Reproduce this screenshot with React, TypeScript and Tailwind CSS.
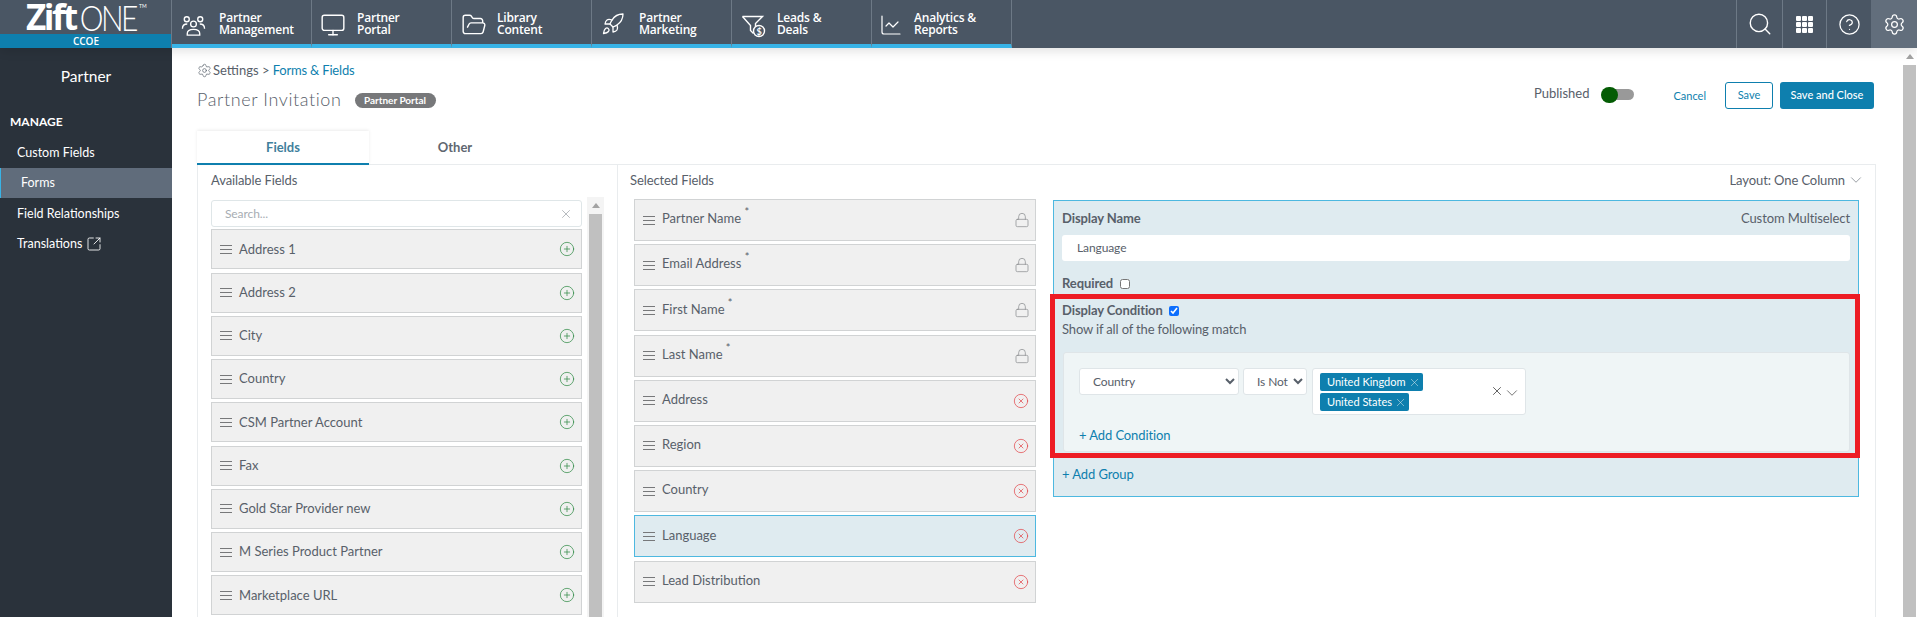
import { ChartLine, ChevronDown, CircleHelp, CirclePlus, CircleX, FolderOpen, Lock, Monitor, Rocket, Search, Settings, SquareArrowOutUpRight, X } from 'lucide-react';
import type { ReactNode } from 'react';

const availableFields = ['Address 1', 'Address 2', 'City', 'Country', 'CSM Partner Account', 'Fax', 'Gold Star Provider new', 'M Series Product Partner', 'Marketplace URL'];
const lockedFields = ['Partner Name', 'Email Address', 'First Name', 'Last Name'];
const removableFields = ['Address', 'Region', 'Country', 'Language', 'Lead Distribution'];

function PartnersIcon() {
  return (
    <svg width="25" height="26" viewBox="0 0 26 26" fill="none" stroke="currentColor" strokeWidth="1.4">
      <circle cx="6" cy="7" r="2.6" />
      <circle cx="20" cy="7" r="2.6" />
      <circle cx="13" cy="12" r="3" />
      <path d="M1.5 17c0-3 2-5 5-5" />
      <path d="M24.5 17c0-3-2-5-5-5" />
      <path d="M6.5 23.5v-1.5c0-3 3-4.5 6.500-4.500s6.500 1.500 6.500 4.500v1.500z" />
    </svg>
  );
}

function FunnelIcon() {
  return (
    <svg width="26" height="26" viewBox="0 0 26 26" fill="none" stroke="currentColor" strokeWidth="1.4">
      <path d="M1.500 4.500h20l-7 7v3" />
      <path d="M1.500 4.500l8 9v5l3 3" />
      <circle cx="18" cy="19" r="5.500" />
      <text x="18" y="22.500" fontSize="9" textAnchor="middle" fill="currentColor" stroke="none" fontFamily="Lato, sans-serif" fontWeight="700">$</text>
    </svg>
  );
}

function NavItem({ icon, iconWidth, top, bottom }: { icon: ReactNode; iconWidth: string; top: string; bottom: string }) {
  return (
    <div className="w-[140px] h-full flex items-start pl-[9px] pt-[12px] border-r border-[#6d7986] border-b-4 border-b-[#38b3e6] text-white">
      <div className={`${iconWidth} shrink-0 text-white`}>{icon}</div>
      <div className="text-[12px] leading-[12px] font-semibold font-['Open_Sans',sans-serif] tracking-[-0.2px]">
        <div>{top}</div>
        <div>{bottom}</div>
      </div>
    </div>
  );
}

function IconCell({ width, children, active }: { width: string; children: ReactNode; active?: boolean }) {
  return <div className={`${width} ${active ? 'bg-[#626e7c]' : 'border-l border-[#6d7986]'} h-full flex items-center justify-center text-white`}>{children}</div>;
}

function Scrollbar({ className, gap }: { className: string; gap: string }) {
  return (
    <div className={`${className} shrink-0 flex flex-col items-center`}>
      <div className={`${gap} flex items-center justify-center`}>
        <div className="w-0 h-0 border-x-[4px] border-x-transparent border-b-[5px] border-b-[#a3a3a3]" />
      </div>
      <div className="flex-1 w-[13px] bg-[#c0c0c0]" />
    </div>
  );
}

function Grip() {
  return (
    <div className="w-[12px] shrink-0 flex flex-col gap-[3px]">
      <div className="h-px bg-[#77787a]" />
      <div className="h-px bg-[#77787a]" />
      <div className="h-px bg-[#77787a]" />
    </div>
  );
}

function Tag({ label }: { label: string }) {
  return (
    <div className="h-[18px] bg-[#0e7fae] rounded-[2px] pl-[7px] pr-[2px] flex items-center gap-[2px] text-white text-[11px] tracking-normal w-fit">
      {label}
      <X size={13} strokeWidth={1} className="text-[#d7e8ef]" />
    </div>
  );
}

export default function App() {
  return (
    <div className="h-screen w-full overflow-hidden flex flex-col bg-white text-[#58606a] font-['Lato',sans-serif]">
      <header className="h-12 shrink-0 flex bg-[#4a5664] relative z-10 shadow-[0_3px_10px_rgba(0,0,0,0.12)]">
        <div className="w-[172px] shrink-0 flex flex-col">
          <div className="h-[34px] flex items-start pl-[26px] text-white">
            <span className="text-[35px] leading-[34px] font-bold font-['Open_Sans',sans-serif] tracking-[-2.5px]">Zift</span>
            <span className="text-[30px] leading-[34px] font-light ml-[4px] tracking-[-2.5px] scale-y-[1.15] origin-center">ONE</span>
            <span className="text-[5px] leading-[5px] mt-[4px] ml-[3px]">TM</span>
          </div>
          <div className="h-[14px] bg-[#0e7fae] text-white text-[10px] leading-[14px] text-center font-semibold font-['Open_Sans',sans-serif]">CCOE</div>
        </div>
        <div className="flex h-full border-l border-[#6d7986] -ml-px">
          <NavItem iconWidth="w-[38px]" icon={<PartnersIcon />} top="Partner" bottom="Management" />
          <NavItem iconWidth="w-[36px]" icon={<Monitor size={26} strokeWidth={1.3} className="-ml-[1px]" />} top="Partner" bottom="Portal" />
          <NavItem iconWidth="w-[36px]" icon={<FolderOpen size={26} strokeWidth={1.3} />} top="Library" bottom="Content" />
          <NavItem iconWidth="w-[38px]" icon={<Rocket size={24} strokeWidth={1.3} />} top="Partner" bottom="Marketing" />
          <NavItem iconWidth="w-[36px]" icon={<FunnelIcon />} top="Leads &" bottom="Deals" />
          <NavItem iconWidth="w-[33px]" icon={<ChartLine size={24} strokeWidth={1.2} className="-ml-[2px] mt-[1px]" />} top="Analytics &" bottom="Reports" />
        </div>
        <div className="flex-1" />
        <div className="flex h-full">
          <IconCell width="w-[46px]"><Search size={26} strokeWidth={1.3} /></IconCell>
          <IconCell width="w-[44px]">
            <div className="grid grid-cols-3 gap-[1px]">
              {Array.from({ length: 9 }).map((_, i) => (
                <div key={i} className="w-[5px] h-[5px] bg-white rounded-[1px]" />
              ))}
            </div>
          </IconCell>
          <IconCell width="w-[45px]"><CircleHelp size={23} strokeWidth={1.3} /></IconCell>
          <IconCell width="w-[46px]" active><Settings size={23} strokeWidth={1.3} /></IconCell>
        </div>
      </header>

      <div className="flex flex-1 min-h-0">
        <aside className="w-[172px] shrink-0 bg-[#2a323b] text-white text-[12.5px]">
          <div className="mt-[18px] h-[20px] text-center text-[15.5px] leading-[20px]">Partner</div>
          <div className="mt-[28px] pl-[10px] h-[16px] text-[12px] leading-[16px] font-bold">MANAGE</div>
          <div className="mt-[8px] h-[30px] pl-[17px] leading-[30px]">Custom Fields</div>
          <div className="h-[30px] pl-[20px] leading-[30px] bg-[#606c7b] border-l border-[#38b3e6]">Forms</div>
          <div className="mt-[1px] h-[30px] pl-[17px] leading-[30px]">Field Relationships</div>
          <div className="h-[30px] pl-[17px] flex items-center gap-[4px]">
            Translations
            <SquareArrowOutUpRight size={16} strokeWidth={1.3} />
          </div>
        </aside>

        <main className="flex-1 min-w-0 flex">
          <div className="flex-1 min-w-0 flex flex-col pl-[25px] pr-[27px] pt-[14px]">
            <div className="h-[16px] flex items-center text-[13px] leading-[16px]">
              <Settings size={15} strokeWidth={1.1} className="mr-[1px]" />
              Settings &gt;&nbsp;<span className="text-[#0e7fae] tracking-[-0.2px]">Forms &amp; Fields</span>
            </div>

            <div className="mt-[4px] h-[49px] flex justify-between items-start">
              <div className="mt-[5px] h-[26px] flex items-center">
                <span className="text-[18px] font-light tracking-[0.6px] -mt-[2px]">Partner Invitation</span>
                <span className="ml-[13px] h-[15px] w-[81px] rounded-full bg-[#77787a] text-white text-[10px] font-bold text-center leading-[15px]">Partner Portal</span>
              </div>
              <div className="flex items-start mr-[2px]">
                <span className="mt-[3px] text-[13px] leading-[16px]">Published</span>
                <div className="ml-[12px] mt-[5px] w-[33px] h-[16px] relative">
                  <div className="ml-[8px] mt-[2px] w-[25px] h-[11px] bg-[#999999] rounded-full" />
                  <div className="absolute left-0 top-0 w-[17px] h-[16px] rounded-full bg-[#045c04]" />
                </div>
                <span className="ml-[39px] mt-[6px] text-[11px] leading-[16px] text-[#0e7fae]">Cancel</span>
                <button className="ml-[19px] w-[48px] h-[27px] border border-[#0e7fae] rounded-[3px] text-[11px] text-[#0e7fae]">Save</button>
                <button className="ml-[7px] w-[94px] h-[27px] bg-[#0e7fae] rounded-[3px] text-[11px] text-white font-medium">Save and Close</button>
              </div>
            </div>

            <div className="h-[34px] flex text-[13px] font-bold shrink-0 relative z-[1] -mb-px">
              <div className="w-[172px] pt-[2px] flex items-center justify-center bg-white text-[#3f7f9c] border-b-2 border-[#0e7fae] shadow-[0_-1px_3px_rgba(0,0,0,0.08)]">Fields</div>
              <div className="w-[172px] flex items-center justify-center text-[#5f6770]">Other</div>
            </div>

            <div className="flex-1 min-h-0 flex border border-[#e9ecee] border-b-0 text-[13px] tracking-[-0.1px]">
              <section className="w-[420px] shrink-0 border-r border-[#e9ecee] flex flex-col pl-[13px] min-h-0">
                <div className="mt-[7px] h-[16px] leading-[16px]">Available Fields</div>
                <div className="mt-[9px] flex-1 min-h-0 flex gap-[5px]">
                  <div className="w-[371px] pt-[3px] flex flex-col gap-[3.25px] overflow-hidden">
                    <div className="h-[27px] mb-[-1px] shrink-0 border border-[#dfe6e8] rounded-[3px] bg-white flex items-center justify-between pl-[13px] pr-[8px] text-[12px] text-[#a7adb3]">
                      Search...
                      <X size={14} strokeWidth={1.1} className="text-[#8f959b]" />
                    </div>
                    {availableFields.map((name) => (
                      <div key={name} className="h-[40px] shrink-0 flex items-center border border-[#d1d3d4] bg-[#f0f0f0] pl-[8px] pr-[6px] tracking-normal">
                        <Grip />
                        <span className="ml-[7px] flex-1">{name}</span>
                        <CirclePlus size={16} strokeWidth={1.1} className="text-[#2f8a45]" />
                      </div>
                    ))}
                  </div>
                  <Scrollbar className="w-[17px] bg-[#f4f4f4]" gap="h-[17px]" />
                </div>
              </section>

              <section className="flex-1 min-w-0 flex flex-col">
                <div className="mt-[7px] h-[16px] leading-[16px] pl-[12px] pr-[10px] flex justify-between">
                  <span>Selected Fields</span>
                  <span className="flex items-center gap-[2px]">Layout: One Column <ChevronDown size={18} strokeWidth={0.8} /></span>
                </div>
                <div className="mt-[11px] pl-[16px] pr-[16px] flex gap-[17px] items-start">
                  <div className="w-[402px] shrink-0 flex flex-col gap-[3.2px]">
                    {lockedFields.map((name) => (
                      <div key={name} className="h-[42px] flex items-center border border-[#d1d3d4] bg-[#f0f0f0] pl-[8px] pr-[5px] tracking-normal">
                        <Grip />
                        <span className="ml-[7px] flex-1 pb-[2px]">{name} <sup className="text-[11px] leading-none -top-[7px]">*</sup></span>
                        <Lock size={16} strokeWidth={1.1} className="text-[#8a8d90]" />
                      </div>
                    ))}
                    {removableFields.map((name) => (
                      <div key={name} className={`h-[42px] flex items-center border pl-[8px] pr-[6px] tracking-normal ${name === 'Language' ? 'border-[#4db8e0] bg-[#dfebf0]' : 'border-[#d1d3d4] bg-[#f0f0f0]'}`}>
                        <Grip />
                        <span className="ml-[7px] flex-1 pb-[2px]">{name}</span>
                        <CircleX size={16} strokeWidth={1.1} className="text-[#e2474c]" />
                      </div>
                    ))}
                  </div>

                  <div className="relative flex-1 min-w-0 mt-px border border-[#4db8e0] bg-[#dfebf0] px-[8px] pt-[9px] pb-[14px]">
                    <div className="h-[16px] leading-[16px] flex justify-between">
                      <span className="font-bold">Display Name</span>
                      <span>Custom Multiselect</span>
                    </div>
                    <div className="mt-[9px] h-[26px] bg-white rounded-[3px] pl-[15px] text-[12px] leading-[26px]">Language</div>
                    <div className="mt-[15px] h-[16px] flex items-center gap-[7px]">
                      <span className="font-bold">Required</span>
                      <input type="checkbox" readOnly className="w-[10px] h-[10px]" />
                    </div>
                    <div className="mt-[11px] h-[16px] flex items-center gap-[6px]">
                      <span className="font-bold">Display Condition</span>
                      <input type="checkbox" checked readOnly className="w-[10px] h-[10px] accent-[#0d6efd]" />
                    </div>
                    <div className="mt-[2px] h-[16px] leading-[16px] tracking-[-0.15px]">Show if all of the following match</div>
                    <div className="mt-[15px] ml-px h-[100px] rounded-[3px] border border-[#dfe5e8] bg-[#eff5f6] pl-[15px] pt-[15px]">
                      <div className="flex items-start gap-[4px] h-[47px]">
                        <select className="w-[160px] h-[27px] bg-white border border-[#dfe5e8] rounded-[3px] pl-[9px] text-[12px] text-[#58606a]">
                          <option>Country</option>
                        </select>
                        <select className="w-[64px] h-[27px] bg-white border border-[#dfe5e8] rounded-[3px] pl-[9px] text-[12px] text-[#58606a]">
                          <option>Is Not</option>
                        </select>
                        <div className="ml-px w-[214px] h-[47px] bg-white border border-[#dfe5e8] rounded-[3px] pl-[7px] pr-[4px] pt-[4px] flex items-center">
                          <div className="flex-1 self-start flex flex-col gap-[2px]">
                            <Tag label="United Kingdom" />
                            <Tag label="United States" />
                          </div>
                          <X size={14} strokeWidth={1.3} className="text-[#333333] -mt-[6px]" />
                          <ChevronDown size={18} strokeWidth={0.9} className="text-[#333333] -mt-[2px] -ml-[1px]" />
                        </div>
                      </div>
                      <div className="mt-[12px] h-[16px] leading-[16px] text-[#0e7fae]">+ Add Condition</div>
                    </div>
                    <div className="mt-[14px] h-[16px] leading-[16px] text-[#0e7fae]">+ Add Group</div>
                    <div className="absolute -left-[4px] top-[93px] w-[810px] h-[164px] border-[5px] border-[#ed1c24] pointer-events-none" />
                  </div>
                </div>
              </section>
            </div>
          </div>
          <Scrollbar className="w-[14px] pr-px" gap="h-[17px]" />
        </main>
      </div>
    </div>
  );
}
